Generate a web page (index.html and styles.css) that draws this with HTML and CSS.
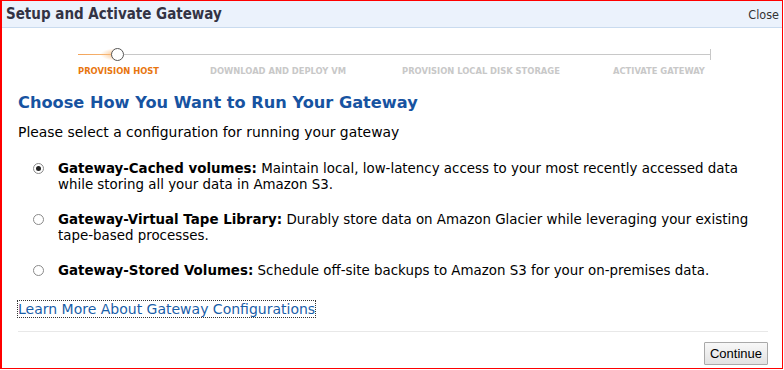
FILE: index.html
```html
<!DOCTYPE html>
<html>
<head>
<meta charset="utf-8">
<link rel="stylesheet" href="styles.css">
</head>
<body>
<div class="dialog">
  <div class="header">
    <span class="title">Setup and Activate Gateway</span>
    <span class="close">Close</span>
  </div>
  <div class="body">
    <div class="stepper">
      <div class="track">
        <div class="glow"></div>
        <div class="dot"></div>
        <div class="line"></div>
        <div class="tick"></div>
      </div>
      <div class="labels">
        <span class="step active">PROVISION HOST</span>
        <span class="step s2">DOWNLOAD AND DEPLOY VM</span>
        <span class="step s3">PROVISION LOCAL DISK STORAGE</span>
        <span class="step s4">ACTIVATE GATEWAY</span>
      </div>
    </div>
    <h2 class="heading">Choose How You Want to Run Your Gateway</h2>
    <p class="intro">Please select a configuration for running your gateway</p>
    <div class="options">
      <div class="option">
        <span class="radio checked"></span>
        <div class="otext"><b>Gateway-Cached volumes:</b> Maintain local, low-latency access to your most recently accessed data while storing all your data in Amazon S3.</div>
      </div>
      <div class="option">
        <span class="radio"></span>
        <div class="otext"><b>Gateway-Virtual Tape Library:</b> Durably store data on Amazon Glacier while leveraging your existing <span class="nw">tape-based</span> processes.</div>
      </div>
      <div class="option">
        <span class="radio"></span>
        <div class="otext"><b>Gateway-Stored Volumes:</b> Schedule off-site backups to Amazon S3 for your on-premises data.</div>
      </div>
    </div>
    <div class="learn"><a class="link">Learn More About Gateway Configurations</a></div>
    <div class="sep"></div>
    <div class="footer"><button class="btn">Continue</button></div>
  </div>
</div>
</body>
</html>
```
FILE: styles.css
```css
html, body { margin: 0; padding: 0; background: #fff; }
body { width: 784px; height: 370px; overflow: hidden; }
.dialog {
  box-sizing: border-box;
  width: 783px; height: 369px;
  border: 1px solid #ff0000; border-left-width: 2px;
  font-family: "DejaVu Sans", Verdana, sans-serif;
  color: #000;
}
.header {
  height: 27px; box-sizing: border-box;
  background: #ebf2fc;
  border-bottom: 1px solid #c9dbef;
  display: flex; align-items: center; justify-content: space-between;
  padding: 0 3px 0 4px;
}
.title {
  font-family: "DejaVu Sans Condensed", "DejaVu Sans", sans-serif;
  font-weight: bold; font-size: 15px; color: #333344;
}
.close { font-family: "DejaVu Sans Condensed", sans-serif; font-size: 12.5px; color: #333; }
.body { padding: 0 14px 0 16px; }
.stepper { margin-left: 60px; width: 634px; padding-top: 20px; }
.track { position: relative; height: 14px; }
.line { position: absolute; left: 46px; right: 2px; top: 6px; height: 1px; background: #c8c8c8; }
.tick { position: absolute; right: 1px; top: 1px; width: 1px; height: 11px; background: #c8c8c8; }
.glow { position: absolute; left: 0; width: 36px; top: 6px; height: 1px; background: linear-gradient(to right, #f3a45a, #f6b879); }
.glow::after { content: ""; position: absolute; right: -4px; top: -6px; width: 18px; height: 13px; background: radial-gradient(ellipse at right center, rgba(248,180,110,0.9), rgba(255,220,180,0) 70%); }
.dot { position: absolute; left: 33px; top: 0; width: 11px; height: 11px; border: 1px solid #555; border-radius: 50%; background: #fff; z-index: 2; }
.labels { position: relative; height: 14px; margin-top: 3px; font-family: "DejaVu Sans Condensed", sans-serif; font-weight: bold; font-size: 9.3px; color: #c8c8c8; }
.step { position: absolute; top: 0; white-space: nowrap; }
.active { left: 0; color: #e8760f; }
.s2 { left: 132px; }
.s3 { left: 324px; }
.s4 { left: 535px; }
.heading { margin: 13px 0 0 0; font-size: 16.2px; font-weight: bold; color: #1753a1; line-height: 22px; }
.intro { margin: 9px 0 0 0; font-size: 13.9px; line-height: 18px; }
.options { margin-top: 20px; display: flex; flex-direction: column; gap: 19px; }
.option { display: flex; align-items: flex-start; }
.radio { width: 11px; height: 11px; border: 1px solid #8a8a8a; border-radius: 50%; margin: 2px 0 0 15px; flex: none; box-sizing: border-box; position: relative; background: #fff; }
.radio.checked::after { content: ""; position: absolute; left: 2px; top: 2px; width: 5px; height: 5px; border-radius: 50%; background: #222; }
.otext { margin-left: 14px; font-size: 13.4px; line-height: 16px; width: 700px; }
.nw { white-space: nowrap; }
.learn { margin-top: 21px; line-height: 18px; }
.link { font-size: 14px; color: #1a5ea8; outline: 1px dotted #333; outline-offset: 0; line-height: 18px; }
.sep { margin-top: 13px; height: 1px; background: #e8e8e8; }
.footer { display: flex; justify-content: flex-end; padding-top: 10px; }
.btn { font-family: "Liberation Sans", Arial, sans-serif; font-size: 13px; height: 23px; padding: 0 5px; border: 1px solid #a9a9a9; background: linear-gradient(#f8f8f8, #e2e2e2); border-radius: 1px; color: #000; }
```
